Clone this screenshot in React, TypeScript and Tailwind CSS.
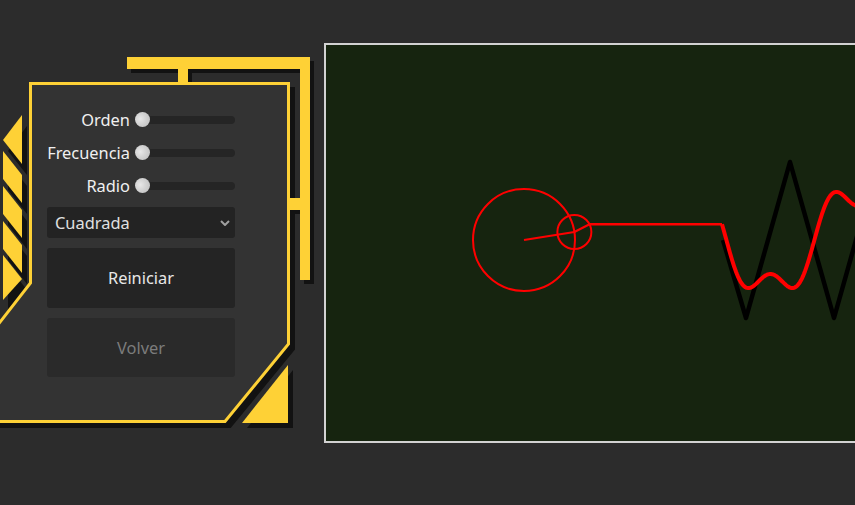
import React from "react";

const Y = "#fed136";
const SH = "#121212";

function Decoration() {
  const panel = "30.5,83.5 288.5,83.5 288.5,344 225,421.5 -10,421.5 -10,335 30.5,283";
  const stripes = [
    "22,115 3,140 22,164",
    "3,151 22,175 22,203 3,179",
    "3,186 22,210 22,238 3,214",
    "3,221 22,245 22,273 3,249",
    "3,255 22,279 3,300",
  ];
  const bracket = [
    [127, 57, 183, 12],
    [300, 57, 10, 223],
    [178, 69, 10, 14],
    [287, 198, 13, 12],
  ];
  return (
    <svg className="absolute left-0 top-0" width={324} height={505} viewBox="0 0 324 505">
      {stripes.map((p, i) => (
        <polygon key={"ss" + i} points={p} fill={SH} transform="translate(5,11)" />
      ))}
      {stripes.map((p, i) => (
        <polygon key={"s" + i} points={p} fill={Y} />
      ))}
      <polygon points={panel} fill={SH} stroke={SH} strokeWidth={3} transform="translate(5,5)" />
      <polygon points="288,365 288,423 242,423" fill={SH} transform="translate(5,5)" />
      <polygon points="288,365 288,423 242,423" fill={Y} />
      {bracket.map(([x, y, w, h], i) => (
        <rect key={"bs" + i} x={x + 4} y={y + 4} width={w} height={h} fill={SH} />
      ))}
      {bracket.map(([x, y, w, h], i) => (
        <rect key={"b" + i} x={x} y={y} width={w} height={h} fill={Y} />
      ))}
      <polygon points={panel} fill="#333333" stroke={Y} strokeWidth={3} />
    </svg>
  );
}

function SliderRow({ label }: { label: string }) {
  return (
    <>
      <div className="h-[33px] flex items-center justify-end pt-[2px] text-[16.4px] text-[#f0f0f0] leading-none pr-[1px]">
        {label}
      </div>
      <div className="h-[33px] flex items-center">
        <div className="relative w-full h-[15px] flex items-center">
          <div className="ml-[7px] h-[8px] flex-1 rounded-full bg-[#252525]" />
          <div className="absolute left-0 top-0 w-[15px] h-[15px] rounded-full bg-[radial-gradient(circle_at_35%_45%,#e8e8e8_0%,#d2d2d2_45%,#bcbcbc_100%)]" />
        </div>
      </div>
    </>
  );
}

function Canvas() {
  const k = 0.0357;
  const t0 = 0.157;
  const pts: string[] = [];
  for (let x = 722; x <= 900; x += 1) {
    const t = t0 - k * (x - 722);
    const y = 240 - 51 * (Math.sin(t) + Math.sin(3 * t) / 3);
    pts.push(`${x},${y.toFixed(2)}`);
  }
  const c1x = 524;
  const c1y = 240;
  const e1x = c1x + 51 * Math.cos(t0);
  const e1y = c1y - 51 * Math.sin(t0);
  const e2x = e1x + 17 * Math.cos(3 * t0);
  const e2y = e1y - 17 * Math.sin(3 * t0);
  return (
    <div className="mt-[43px] h-[400px] w-[560px] shrink-0 border-2 border-[#d2d2d2] bg-[#16240f] overflow-hidden">
      <svg width={556} height={396} viewBox="326 45 556 396">
        <polyline
          points="723,240 746,318 790,162 834,318 878,162"
          fill="none"
          stroke="#000"
          strokeWidth={4.5}
          strokeLinejoin="round"
        />
        <circle cx={c1x} cy={c1y} r={51} fill="none" stroke="#ff0000" strokeWidth={2} />
        <line x1={c1x} y1={c1y} x2={e1x} y2={e1y} stroke="#ff0000" strokeWidth={2.2} />
        <circle cx={e1x} cy={e1y} r={17} fill="none" stroke="#ff0000" strokeWidth={2} />
        <line x1={e1x} y1={e1y} x2={e2x} y2={e2y} stroke="#ff0000" strokeWidth={2.2} />
        <line x1={e2x} y1={e2y} x2={722} y2={e2y} stroke="#ff0000" strokeWidth={2.5} />
        <polyline points={pts.join(" ")} fill="none" stroke="#ff0000" strokeWidth={4} strokeLinejoin="round" />
      </svg>
    </div>
  );
}

export default function App() {
  return (
    <div className="w-[855px] h-[505px] bg-[#2c2c2c] flex overflow-hidden font-['Noto_Sans',sans-serif]">
      <div className="relative w-[324px] shrink-0 h-full">
        <Decoration />
        <div className="relative w-[235px] pl-[47px] pt-[103px] flex flex-col">
          <div className="grid grid-cols-[84px_1fr] gap-x-[4px]">
            <SliderRow label="Orden" />
            <SliderRow label="Frecuencia" />
            <SliderRow label="Radio" />
          </div>
          <div className="mt-[5px] h-[31px] rounded-[3px] bg-[#232323] flex items-center justify-between pl-[8px] pr-[5px] text-[16.4px] text-[#e0e0e0]">
            <span className="pt-[2px]">Cuadrada</span>
            <svg width={10} height={6} viewBox="0 0 10 6">
              <polyline points="1,1 5,5 9,1" fill="none" stroke="#a0a0a0" strokeWidth={2} />
            </svg>
          </div>
          <div className="mt-[10px] h-[60px] rounded-[3px] bg-[#242424] flex items-center justify-center pt-[1px] text-[16.4px] text-[#e8e8e8]">
            Reiniciar
          </div>
          <div className="mt-[10px] h-[59px] rounded-[3px] bg-[#2a2a2a] flex items-center justify-center pt-[1px] text-[16.4px] text-[#7c7c7c]">
            Volver
          </div>
        </div>
      </div>
      <Canvas />
    </div>
  );
}
